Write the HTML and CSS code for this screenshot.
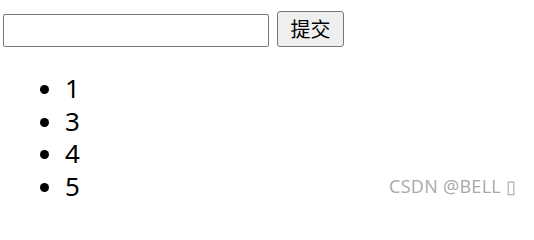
FILE: index.html
```html
<!DOCTYPE html>
<html lang="zh">
<head>
<meta charset="utf-8">
<link rel="stylesheet" href="styles.css">
</head>
<body>
<div class="form">
  <input class="field" type="text">
  <button class="submit">提交</button>
</div>
<ul class="list">
  <li>1</li>
  <li>3</li>
  <li>4</li>
  <li>5</li>
</ul>
<div class="watermark">CSDN @BELL ▯</div>
</body>
</html>
```
FILE: styles.css
```css
html, body {
  margin: 0;
  padding: 0;
  background: #fff;
}
body {
  font-family: "Noto Sans", "Noto Sans CJK SC", sans-serif;
  color: #000;
  position: relative;
  width: 534px;
  height: 206px;
  overflow: hidden;
}
.form {
  display: flex;
  align-items: flex-end;
  gap: 8px;
  padding: 11px 0 0 3px;
}
.field {
  box-sizing: border-box;
  width: 266px;
  height: 33px;
  margin: 0;
  border: 1px solid #767676;
  border-radius: 2px;
  background: #fff;
  font-size: 20px;
  padding: 0 4px;
}
.submit {
  box-sizing: border-box;
  width: 67px;
  height: 36px;
  margin: 0;
  padding: 0;
  border: 1px solid #767676;
  border-radius: 3px;
  background: #efefef;
  font-family: "Noto Sans CJK SC", sans-serif;
  font-size: 20px;
  color: #000;
  line-height: 1;
}
.list {
  margin: 25px 0 0 0;
  padding: 0 0 0 65px;
  font-size: 26px;
  line-height: 32.6px;
}
.watermark {
  position: absolute;
  left: 389px;
  top: 174px;
  font-family: "Open Sans", "Noto Sans", sans-serif;
  font-size: 18px;
  letter-spacing: 0.3px;
  color: #a8a8a8;
  line-height: 24px;
}
```
